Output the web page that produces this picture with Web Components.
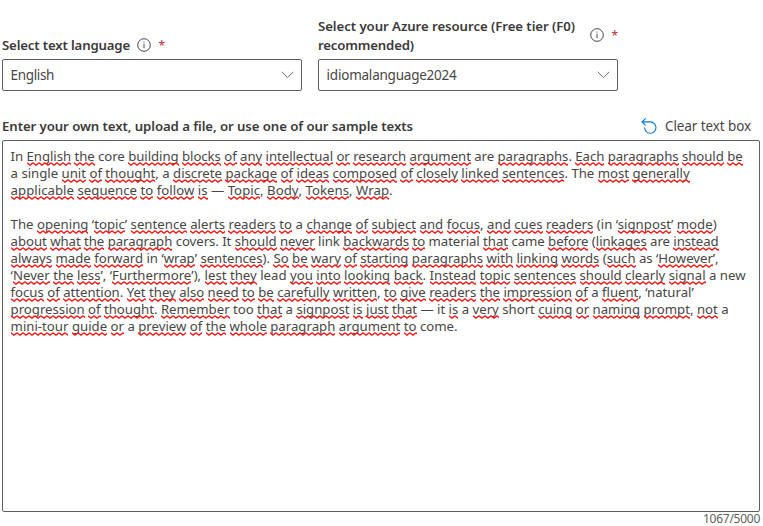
<!DOCTYPE html>
<html lang="en"><head><meta charset="utf-8"><title>Analyze text</title>
<style>
html,body{margin:0;height:100%;background:#fff;overflow:hidden}
body{font:14px "Noto Sans","Open Sans",sans-serif;color:#3b3a39}
</style></head><body>
<text-form></text-form>
<script>
// One line of text, spaced to fill a given width. *word* gets a spelling mark.
class FitLine extends HTMLElement{
  connectedCallback(){
    const root=this.attachShadow({mode:'open'});
    const raw=this.textContent;
    root.innerHTML=`<style>
:host{display:block;white-space:pre;line-height:inherit;height:1lh}
.s{display:inline-block;vertical-align:top}
.m{position:relative}
.m::after{content:"";position:absolute;left:0;right:0;top:15px;height:4px;
background:url("data:image/svg+xml,%3Csvg xmlns='http://www.w3.org/2000/svg' width='6' height='4'%3E%3Cpath d='M-1.5 .2L0 .9L3 3.1L6 .9L7.5 .2' fill='none' stroke='%23ff1a1a' stroke-width='1.25'/%3E%3C/svg%3E") 0 0/6px 4px repeat-x}
</style><span class="s"></span>`;
    const s=root.querySelector('.s');
    raw.split(/(\*[^*]+\*)/).forEach(t=>{
      if(!t)return;
      if(t[0]==='*'){const m=document.createElement('span');m.className='m';m.textContent=t.slice(1,-1);s.append(m)}
      else s.append(t);
    });
    const w=+this.getAttribute('w');
    if(w){
      const n=raw.replace(/\*/g,'').length;
      s.style.letterSpacing=(w-s.getBoundingClientRect().width)/n+'px';
    }
  }
}
customElements.define('fit-line',FitLine);

class InfoIcon extends HTMLElement{
  connectedCallback(){
    this.attachShadow({mode:'open'}).innerHTML=`<style>:host{display:block;width:14px;height:14px}svg{display:block}</style>
<svg width="14" height="14" viewBox="0 0 14 14" fill="none" stroke="#323130"><circle cx="7" cy="7" r="6.3" stroke-width=".9"/><path d="M7 5.8V10.2M7 3.6V4.6" stroke-width=".9"/></svg>`;
  }
}
customElements.define('info-icon',InfoIcon);

class SelectField extends HTMLElement{
  connectedCallback(){
    this.attachShadow({mode:'open'}).innerHTML=`<style>
:host{display:flex;flex-direction:column;justify-content:flex-end;width:300px;height:91px}
.l{display:flex;align-items:center;font-size:13.2px;font-weight:600;line-height:19px;margin-bottom:4px}
info-icon{margin:-2px 0 0 var(--gap,7px)}
.r{color:#c02a30;font-weight:400;font-size:12px;margin:-1px 0 0 7.5px}
.b{box-sizing:border-box;height:32px;border:1px solid #605e5c;border-radius:2px;display:flex;align-items:center;justify-content:space-between;padding:0 7px 0 7.6px;line-height:20px;font-size:13.5px;color:#484644}
</style><div class="l"><div><slot name="label"></slot></div><info-icon></info-icon><span class="r">*</span></div>
<div class="b"><slot></slot><svg width="13" height="8" viewBox="0 0 13 8" fill="none" stroke="#605e5c" stroke-width=".9"><path d="M.7.8L6.5 6.6L12.3.8"/></svg></div>`;
  }
}
customElements.define('select-field',SelectField);

class ClearButton extends HTMLElement{
  connectedCallback(){
    this.attachShadow({mode:'open'}).innerHTML=`<style>:host{display:flex;align-items:center;gap:8px;font-size:13.5px;line-height:20px;color:#484644}svg{display:block}</style>
<svg width="16" height="16" viewBox="0 0 16 16" fill="none" stroke="#0078d4" stroke-width="1.1"><path d="M4.7.4L1 3.9L4.7 7.4M1 3.9H9.3A5.7 5.7 0 1 1 3.6 9.6"/></svg><slot></slot>`;
  }
}
customElements.define('clear-button',ClearButton);

class TextArea extends HTMLElement{
  connectedCallback(){
    this.attachShadow({mode:'open'}).innerHTML=`<style>:host{display:block;box-sizing:border-box;width:758px;height:372px;border:1px solid #605e5c;border-radius:2px;padding:7px 7px 7px 7.6px;font-size:13.2px;line-height:17px;color:#484644}</style><slot></slot>`;
  }
}
customElements.define('text-area',TextArea);

class TextForm extends HTMLElement{
  connectedCallback(){
    this.attachShadow({mode:'open'}).innerHTML=`<style>
:host{display:block;padding-left:2px}
.f{display:flex;gap:16px}
.h{display:flex;justify-content:space-between;align-items:center;width:749px;height:20px;margin:25px 0 4px;line-height:20px}
.t{font-size:13.2px;font-weight:600}
.c{width:758px;display:flex;justify-content:flex-end;font-size:12px;line-height:14px;color:#605e5c}
</style>
<div class="f">
<select-field><fit-line slot="label" w="128">Select text language</fit-line><fit-line w="43.5">English</fit-line></select-field>
<select-field style="--gap:15px"><fit-line slot="label" w="257">Select your Azure resource (Free tier (F0)</fit-line><fit-line slot="label" w="96">recommended)</fit-line><fit-line w="130">idiomalanguage2024</fit-line></select-field>
</div>
<div class="h"><fit-line class="t" w="411">Enter your own text, upload a file, or use one of our sample texts</fit-line><clear-button><fit-line w="86">Clear text box</fit-line></clear-button></div>
<text-area>
<fit-line w="732">In *English* *the* core *building* *blocks* *of* *any* *intellectual* *or* *research* *argument* are *paragraphs*. *Each* *paragraphs* *should* *be*</fit-line>
<fit-line w="679">a single *unit* *of* *thought*, a *discrete* *package* *of* *ideas* *composed* *of* *closely* *linked* *sentences*. The *most* *generally*</fit-line>
<fit-line w="382">*applicable* *sequence* *to* *follow* *is* — *Topic*, *Body*, *Tokens*, *Wrap*.</fit-line>
<fit-line> </fit-line>
<fit-line w="706">The *opening* ‘*topic*’ *sentence* *alerts* *readers* *to* a *change* *of* *subject* *and* *focus*, *and* *cues* *readers* (in ‘*signpost*’ *mode*)</fit-line>
<fit-line w="708">*about* *what* *the* *paragraph* covers. It *should* *never* link *backwards* *to* material *that* came *before* (*linkages* are *instead*</fit-line>
<fit-line w="708">*always* *made* *forward* in ‘*wrap*’ *sentences*). *So* *be* *wary* *of* *starting* *paragraphs* *with* *linking* *words* (*such* as ‘*However*’,</fit-line>
<fit-line w="735">‘*Never* *the* *less*’, ‘*Furthermore*’), *lest* *they* lead *you* *into* *looking* *back*. *Instead* *topic* *sentences* *should* *clearly* *signal* a new</fit-line>
<fit-line w="683">*focus* *of* *attention*. *Yet* *they* *also* *need* *to* *be* *carefully* *written*, *to* *give* *readers* *the* *impression* *of* a *fluent*, ‘natural’</fit-line>
<fit-line w="718">*progression* *of* *thought*. *Remember* too *that* a *signpost* *is* *just* *that* — it *is* a *very* short *cuing* *or* *naming* *prompt*, *not* a</fit-line>
<fit-line w="447">*mini-tour* *guide* *or* a *preview* *of* *the* *whole* *paragraph* *argument* *to* come.</fit-line>
</text-area>
<div class="c"><fit-line w="57">1067/5000</fit-line></div>`;
  }
}
customElements.define('text-form',TextForm);
</script></body></html>
